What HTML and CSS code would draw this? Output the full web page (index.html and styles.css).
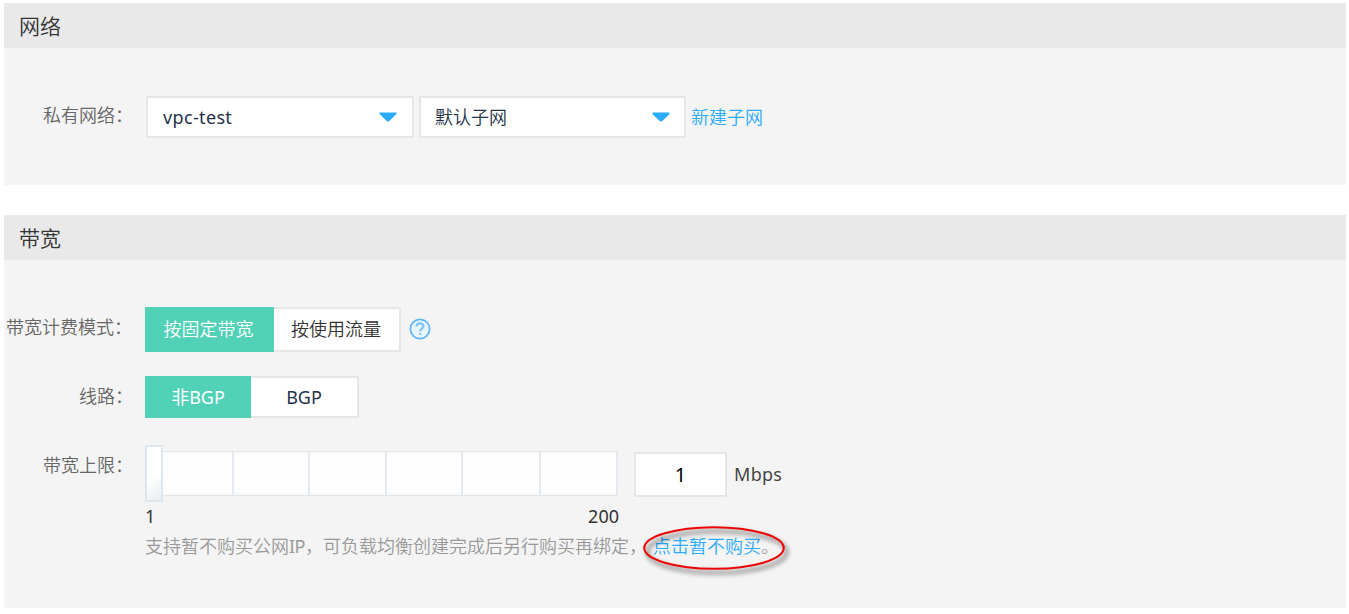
FILE: index.html
```html
<!DOCTYPE html>
<html lang="zh-CN">
<head>
<meta charset="utf-8">
<title>网络与带宽</title>
<link rel="stylesheet" href="styles.css">
</head>
<body>
<section class="panel panel-network">
  <h2 class="panel-title">网络</h2>
  <div class="panel-body">
    <div class="row">
      <div class="label">私有网络：</div>
      <div class="selects">
        <div class="select select-vpc"><span class="latin">vpc-test</span><svg class="caret" viewBox="0 0 18 10"><path d="M0.5 0.5H17.5V2L10.6 8.8Q9 10 7.4 8.8L0.5 2Z" fill="#2aabfe"/></svg></div>
        <div class="select"><span>默认子网</span><svg class="caret" viewBox="0 0 18 10"><path d="M0.5 0.5H17.5V2L10.6 8.8Q9 10 7.4 8.8L0.5 2Z" fill="#2aabfe"/></svg></div>
        <a class="link">新建子网</a>
      </div>
    </div>
  </div>
</section>
<section class="panel panel-bandwidth">
  <h2 class="panel-title">带宽</h2>
  <div class="panel-body">
    <div class="row row-mode">
      <div class="label">带宽计费模式：</div>
      <div class="segments mode">
        <div class="segment active">按固定带宽</div>
        <div class="segment">按使用流量</div>
      </div>
      <svg class="help" viewBox="0 0 22 22"><circle cx="11" cy="11" r="9.6" fill="#e9f5fe" stroke="#62b7f5" stroke-width="1.8"/><path d="M7.6 8.6C7.6 4.4 14.4 4.5 14.4 8.3C14.4 10.8 11.2 10.7 11.2 13.4M11.2 14.9V17" fill="none" stroke="#7fc5f8" stroke-width="2.2"/></svg>
    </div>
    <div class="row row-line">
      <div class="label">线路：</div>
      <div class="segments line">
        <div class="segment active">非BGP</div>
        <div class="segment dark">BGP</div>
      </div>
    </div>
    <div class="row row-limit">
      <div class="label">带宽上限：</div>
      <div class="limit">
        <div class="slider-line">
          <div class="slider">
            <div class="handle"></div>
            <div class="track"><i></i><i></i><i></i><i></i><i></i><i></i></div>
          </div>
          <div class="number">1</div>
          <span class="unit">Mbps</span>
        </div>
        <div class="scale"><span>1</span><span>200</span></div>
        <div class="hint"><span>支持暂不购买公网<span class="ip">IP</span>，可负载均衡创建完成后另行购买再绑定，</span><span class="marked"><a class="link">点击暂不购买</a>。<svg class="ring" viewBox="0 0 160 64"><ellipse cx="80" cy="32" rx="69.7" ry="20.7" fill="none" stroke="#ed0606" stroke-width="2.1"/></svg></span></div>
      </div>
    </div>
  </div>
</section>
</body>
</html>
```

FILE: styles.css
```css
* { box-sizing: border-box; }
body {
  margin: 0;
  padding: 3px 3px 0 4px;
  background: #fff;
  color: #333;
  font: 350 18px/24px "Noto Sans", "Noto Sans CJK SC", sans-serif;
  white-space: nowrap;
}
.panel { background: #f4f4f4; }
.panel-network { height: 182px; margin-bottom: 30px; }
.panel-bandwidth { height: 393px; }
.panel-title {
  margin: 0;
  height: 45px;
  padding-left: 15px;
  background: #e9e9e9;
  font-size: 21px;
  font-weight: 350;
  line-height: 46px;
}
.panel-network .panel-body { padding-top: 48px; }
.panel-bandwidth .panel-body { padding-top: 47px; }
.row { display: flex; align-items: flex-start; }
.label {
  width: 129px;
  margin-right: 12px;
  padding-top: 7px;
  color: #666;
  text-align: right;
}
.selects { display: flex; align-items: center; padding-left: 1px; }
.select {
  display: flex;
  align-items: center;
  justify-content: space-between;
  width: 267px;
  height: 42px;
  padding: 0 14px;
  border: 2px solid #e6e6e6;
  background: #fff;
  color: #24324a;
}
.select-vpc { width: 268px; margin-right: 5px; padding: 0 15px; }
.latin, .unit, .scale, .number, .dark, .line .active, .ip { font-weight: 400; }
.latin { letter-spacing: .35px; }
.unit { letter-spacing: .3px; color: #444; }
.ip { letter-spacing: -.5px; }
.caret { width: 18px; height: 10px; }
.link { color: #2aabfe; }
.selects .link { margin-left: 5px; }
.segments { display: flex; }
.segment {
  display: flex;
  align-items: center;
  justify-content: center;
  border: 2px solid #e6e6e6;
  border-left: 0;
  background: #fff;
}
.segment.active { border: 0; background: #51d2b7; color: #fff; }
.segment.dark { color: #24324a; }
.mode .segment { width: 127px; height: 45px; padding: 0 1px 1px 0; }
.mode .active { width: 129px; padding-right: 2px; }
.line .segment { width: 108px; height: 42px; }
.line .active { width: 106px; }
.help { width: 22px; height: 22px; margin: 11px 0 0 8px; }
.row-mode .label { padding: 8px 1px 0 0; }
.row-line { margin-top: 24px; }
.row-line .label { padding-top: 8px; }
.row-limit { margin-top: 27px; }
.row-limit .label { padding-top: 8px; }
.slider-line { display: flex; align-items: center; height: 57px; }
.slider { display: flex; align-items: center; width: 474px; }
.handle {
  width: 18px;
  height: 57px;
  border: 2px solid #dfe6ed;
  background: linear-gradient(145deg, #fff 55%, #e9edf1);
}
.track {
  display: grid;
  grid-template-columns: 71px 76px 77px 76px 78px 77px;
  height: 45px;
  border: solid #e5e6e7;
  border-width: 1px 0;
  background: #fdfdfd;
}
.track i { border-right: 2px solid #e3e9ef; box-shadow: inset 0 2px #f7f9fa, inset 0 -2px #f7f9fa; }
.number {
  width: 93px;
  height: 45px;
  margin: 2px 7px 0 15px;
  border: 2px solid #e6e6e6;
  background: #fff;
  color: #000;
  font-size: 20px;
  line-height: 41px;
  text-align: center;
}
.scale {
  display: flex;
  justify-content: space-between;
  width: 474px;
  height: 30px;
  line-height: 28px;
}
.hint { display: flex; color: #999; line-height: 28px; }
.marked { position: relative; margin-left: 6px; }
.ring {
  position: absolute;
  left: -19px;
  top: -16px;
  width: 160px;
  height: 64px;
  filter: drop-shadow(3px 4px 2.5px rgba(0, 0, 0, .7));
}
```
